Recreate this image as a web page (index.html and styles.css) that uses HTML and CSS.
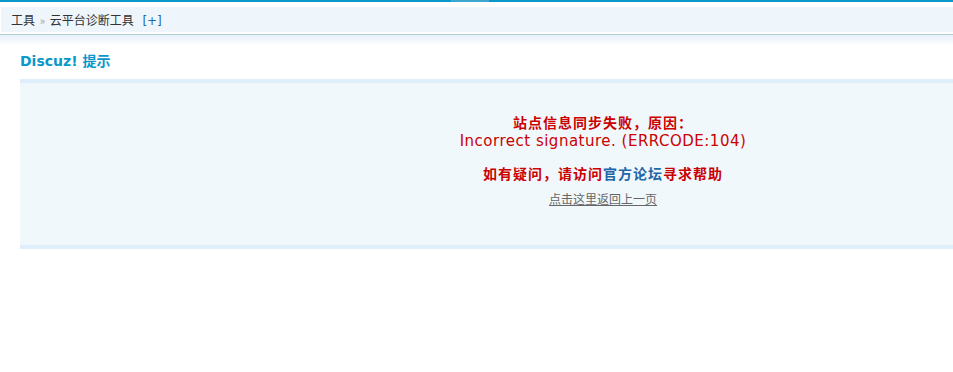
FILE: index.html
```html
<!DOCTYPE html>
<html lang="zh-CN">
<head>
<meta charset="utf-8">
<title>Discuz! 提示</title>
<link rel="stylesheet" href="styles.css">
</head>
<body>
<div class="topbar"><span class="seg-a"></span><span class="seg-b"></span><span class="seg-c"></span></div>
<div class="nav">工具 <span class="raquo">&raquo;</span> 云平台诊断工具 <a class="plus" href="#">[+]</a></div>
<div class="shade"></div>
<div class="main">
  <h3 class="title">Discuz! 提示</h3>
  <div class="msgbox">
    <p class="err">站点信息同步失败，原因：<br><span class="latin">Incorrect signature. (ERRCODE:104)</span></p>
    <p class="err help">如有疑问，请访问<a class="forum" href="#">官方论坛</a>寻求帮助</p>
    <p class="back"><a href="#">点击这里返回上一页</a></p>
  </div>
</div>
</body>
</html>
```
FILE: styles.css
```css
html, body {
  margin: 0;
  padding: 0;
  overflow: hidden;
  background: #fff;
  font-family: "Noto Sans CJK SC", "DejaVu Sans", sans-serif;
  font-size: 12px;
  color: #333;
}
.topbar {
  display: flex;
  height: 2px;
}
.seg-a { width: 451px; background: #0a97c9; }
.seg-b { width: 38px; background: #3da7cf; }
.seg-c { flex: 1; background: #0a97c9; }
.nav {
  margin: 5px 0 0 1px;
  height: 25px;
  line-height: 25px;
  padding-left: 10px;
  background: #eef6fb;
  color: #333;
  white-space: nowrap;
}
.raquo {
  color: #999;
  font-size: 11px;
  margin: 0 2px;
}
.plus {
  color: #2366a8;
  text-decoration: none;
  margin-left: 6px;
  font-family: "DejaVu Sans", sans-serif;
}
.shade {
  margin-top: 2px;
  height: 10px;
  border-top: 1px solid #b7ced8;
  background: linear-gradient(#e5f0fa, #fff);
}
.main {
  padding-left: 20px;
}
.title {
  margin: 0;
  padding-top: 6px;
  height: 28px;
  line-height: 20px;
  font-size: 14px;
  font-weight: bold;
  color: #0a97c9;
  font-family: "DejaVu Sans", "Noto Sans CJK SC", sans-serif;
}
.msgbox {
  width: 1166px;
  border-top: 4px solid #deeefa;
  border-bottom: 4px solid #deeefa;
  background: #f0f8fc;
  text-align: center;
  padding-top: 30px;
  box-sizing: content-box;
  height: 132px;
}
.msgbox p {
  margin: 0;
}
.err {
  color: #cc0000;
  font-size: 14px;
  font-weight: bold;
  line-height: 18px;
  letter-spacing: 1px;
}
.latin {
  font-family: "DejaVu Sans", sans-serif;
  font-weight: normal;
  font-size: 15px;
  letter-spacing: 0.5px;
}
.help {
  margin-top: 14px !important;
}
.forum {
  color: #2366a8;
  text-decoration: none;
}
.back {
  margin-top: 8px !important;
  line-height: 18px;
  font-size: 12px;
}
.back a {
  color: #666;
  text-decoration: underline;
}
```
